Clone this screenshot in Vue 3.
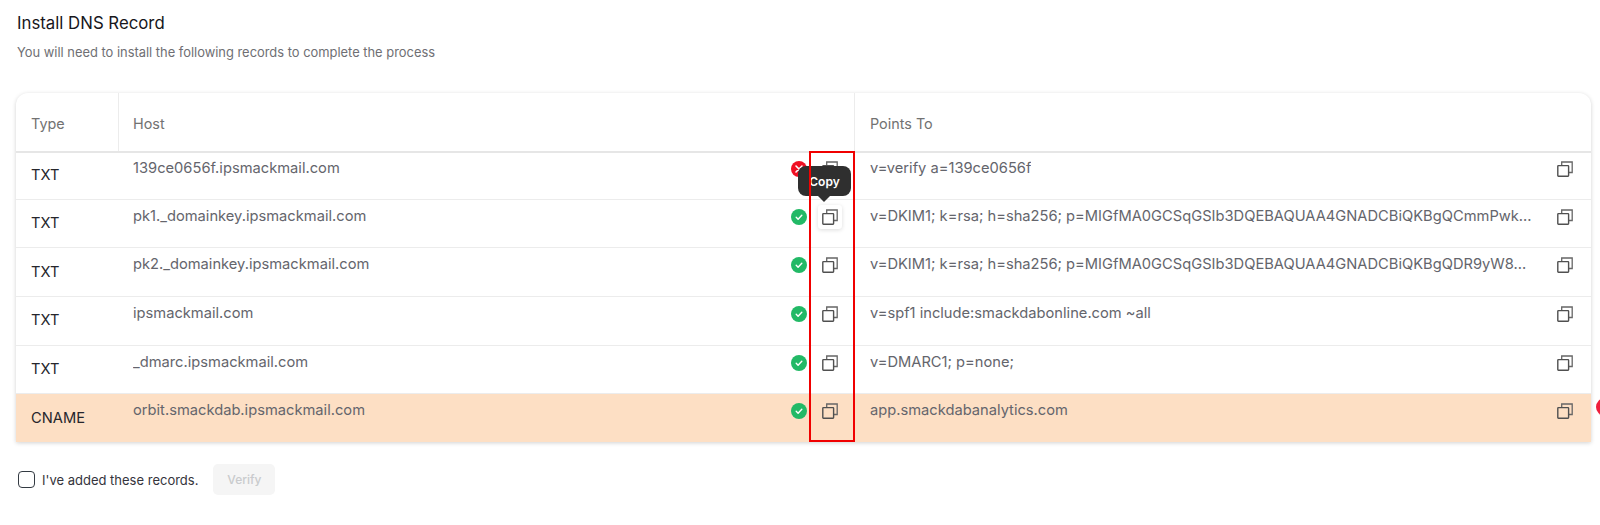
<script setup>
const records = [
  { type: 'TXT', host: '139ce0656f.ipsmackmail.com', ok: false, value: 'v=verify a=139ce0656f' },
  { type: 'TXT', host: 'pk1._domainkey.ipsmackmail.com', ok: true, hover: true, value: 'v=DKIM1; k=rsa; h=sha256; p=MIGfMA0GCSqGSIb3DQEBAQUAA4GNADCBiQKBgQCmmPwk...' },
  { type: 'TXT', host: 'pk2._domainkey.ipsmackmail.com', ok: true, value: 'v=DKIM1; k=rsa; h=sha256; p=MIGfMA0GCSqGSIb3DQEBAQUAA4GNADCBiQKBgQDR9yW8...' },
  { type: 'TXT', host: 'ipsmackmail.com', ok: true, value: 'v=spf1 include:smackdabonline.com ~all' },
  { type: 'TXT', host: '_dmarc.ipsmackmail.com', ok: true, value: 'v=DMARC1; p=none;' },
  { type: 'CNAME', host: 'orbit.smackdab.ipsmackmail.com', ok: true, value: 'app.smackdabanalytics.com', active: true }
]
</script>

<template>
  <main class="page">
    <h1 class="title">Install DNS Record</h1>
    <p class="subtitle">You will need to install the following records to complete the process</p>

    <section class="table">
      <div class="row head">
        <div class="type">Type</div>
        <div class="host">Host</div>
        <div class="points">Points To</div>
      </div>
      <div v-for="r in records" :key="r.host" class="row body" :class="{ active: r.active }">
        <div class="type">{{ r.type }}</div>
        <div class="host">
          <span class="text">{{ r.host }}</span>
          <span class="status" :class="r.ok ? 'good' : 'bad'">
            <svg v-if="r.ok" viewBox="0 0 16 16" width="16" height="16"><path d="M5.2 8.3l1.9 1.9 3.7-3.9" fill="none" stroke="#fff" stroke-width="1.4" stroke-linecap="round" stroke-linejoin="round"/></svg>
            <svg v-else viewBox="0 0 16 16" width="16" height="16"><path d="M5 5l6 6M11 5l-6 6" fill="none" stroke="#fff" stroke-width="1.6" stroke-linecap="round"/></svg>
          </span>
          <span class="copy" :class="{ hover: r.hover }">
            <svg viewBox="0 0 16 16" width="16" height="16"><path d="M4.7 4.5V1h10.5v10.5H11.6" fill="none" stroke="#666" stroke-width="1.3"/><rect x="0.8" y="4.6" width="10.8" height="10.6" rx="0.6" fill="none" stroke="#505050" stroke-width="1.4"/></svg>
          </span>
        </div>
        <div class="points">
          <span class="text">{{ r.value }}</span>
          <span class="copy end">
            <svg viewBox="0 0 16 16" width="16" height="16"><path d="M4.7 4.5V1h10.5v10.5H11.6" fill="none" stroke="#666" stroke-width="1.3"/><rect x="0.8" y="4.6" width="10.8" height="10.6" rx="0.6" fill="none" stroke="#505050" stroke-width="1.4"/></svg>
          </span>
        </div>
      </div>
      <div class="tooltip">Copy</div>
      <div class="marker"></div>
    </section>

    <div class="confirm">
      <label class="check"><input type="checkbox" />I've added these records.</label>
      <button class="verify" disabled>Verify</button>
    </div>
    <div class="dot"></div>
  </main>
</template>

<style scoped>
.page {
  position: relative;
  width: 1600px;
  height: 525px;
  overflow: hidden;
  background: #fff;
  box-sizing: border-box;
  padding: 13px 9px 0 16px;
  font-family: Inter, "Open Sans", sans-serif;
  color: #5f5f66;
}
.title {
  margin: 0;
  font-size: 16.8px;
  line-height: 20px;
  font-weight: 400;
  color: #17171c;
  padding-left: 1px;
}
.subtitle {
  margin: 10px 0 0;
  font-size: 12.9px;
  line-height: 20px;
  color: #6f6f74;
  padding-left: 1px;
}
.table {
  position: relative;
  margin-top: 30px;
  width: 1575px;
  border-radius: 12px 12px 0 0;
  box-shadow: 0 1px 4px rgba(0, 0, 0, 0.18);
}
.row {
  display: grid;
  grid-template-columns: 103px 736px 1fr;
}
.head {
  height: 60px;
  border-bottom: 2px solid #e6e6e6;
  box-sizing: border-box;
  font-size: 14.4px;
  color: #727272;
}
.head > div {
  display: flex;
  align-items: center;
  padding: 2px 0 0 15px;
}
.head .host {
  padding-left: 14px;
}
.head .type,
.head .host {
  border-right: 1px solid #ececec;
}
.body {
  height: 48.7px;
  box-sizing: border-box;
  border-bottom: 1px solid #ececec;
  font-size: 14.7px;
}
.head + .body {
  height: 46.6px;
}
.body.active {
  height: 48px;
  background: #fddfc4;
  border-bottom: 0;
}
.body > div {
  display: flex;
  padding-left: 15px;
  min-width: 0;
}
.body .type {
  align-items: center;
  padding-bottom: 1px;
  color: #26262c;
}
.body .host,
.body .points {
  position: relative;
  padding-top: 7px;
  line-height: 18px;
  box-sizing: border-box;
}
.head + .body .host,
.head + .body .points {
  padding-top: 6px;
}
.body .host {
  padding-left: 14px;
  border-right: 1px solid #ececec;
}
.text {
  white-space: nowrap;
  overflow: hidden;
  color: #64656c;
}
.status {
  position: absolute;
  left: 672px;
  top: 9px;
  width: 16px;
  height: 16px;
  border-radius: 50%;
  display: flex;
}
.status.good { background: #22b966; }
.status.bad { background: #ef0f23; }
.copy {
  position: absolute;
  left: 703px;
  top: 9px;
  width: 16px;
  height: 16px;
  display: flex;
}
.head + .body .status,
.head + .body .copy {
  top: 8px;
}
.copy.end {
  left: auto;
  right: 18px;
}
.copy.hover {
  box-shadow: 0 0 0 4px #fff, 0 1px 4px 4px rgba(0, 0, 0, 0.14);
  border-radius: 1px;
  background: #fff;
}
.tooltip {
  position: absolute;
  left: 782px;
  top: 73px;
  width: 53px;
  height: 30px;
  border-radius: 8px;
  background: #2f2f2f;
  color: #fff;
  font-size: 12px;
  font-weight: 600;
  display: flex;
  align-items: center;
  justify-content: center;
}
.tooltip::after {
  content: "";
  position: absolute;
  left: 20px;
  top: 30px;
  border-left: 6px solid transparent;
  border-right: 6px solid transparent;
  border-top: 6px solid #2f2f2f;
}
.marker {
  position: absolute;
  left: 793px;
  top: 58px;
  width: 46px;
  height: 291px;
  border: 2.5px solid #f00000;
  box-sizing: border-box;
}
.confirm {
  display: flex;
  align-items: center;
  margin-top: 22px;
  height: 31px;
}
.check {
  display: flex;
  align-items: center;
  font-size: 13px;
  color: #34343c;
  padding-left: 2px;
}
.check input {
  appearance: none;
  width: 17px;
  height: 17px;
  margin: 0 7px 0 0;
  border: 1.8px solid #333a42;
  border-radius: 4px;
  box-sizing: border-box;
}
.verify {
  margin-left: 15px;
  width: 62px;
  height: 31px;
  border: 0;
  border-radius: 5px;
  background: #f5f5f5;
  color: #c9cbcd;
  font: 500 12px Inter, sans-serif;
}
.dot {
  position: absolute;
  left: 1596px;
  top: 398px;
  width: 18px;
  height: 18px;
  border-radius: 50%;
  background: #ef1f3c;
}
</style>
